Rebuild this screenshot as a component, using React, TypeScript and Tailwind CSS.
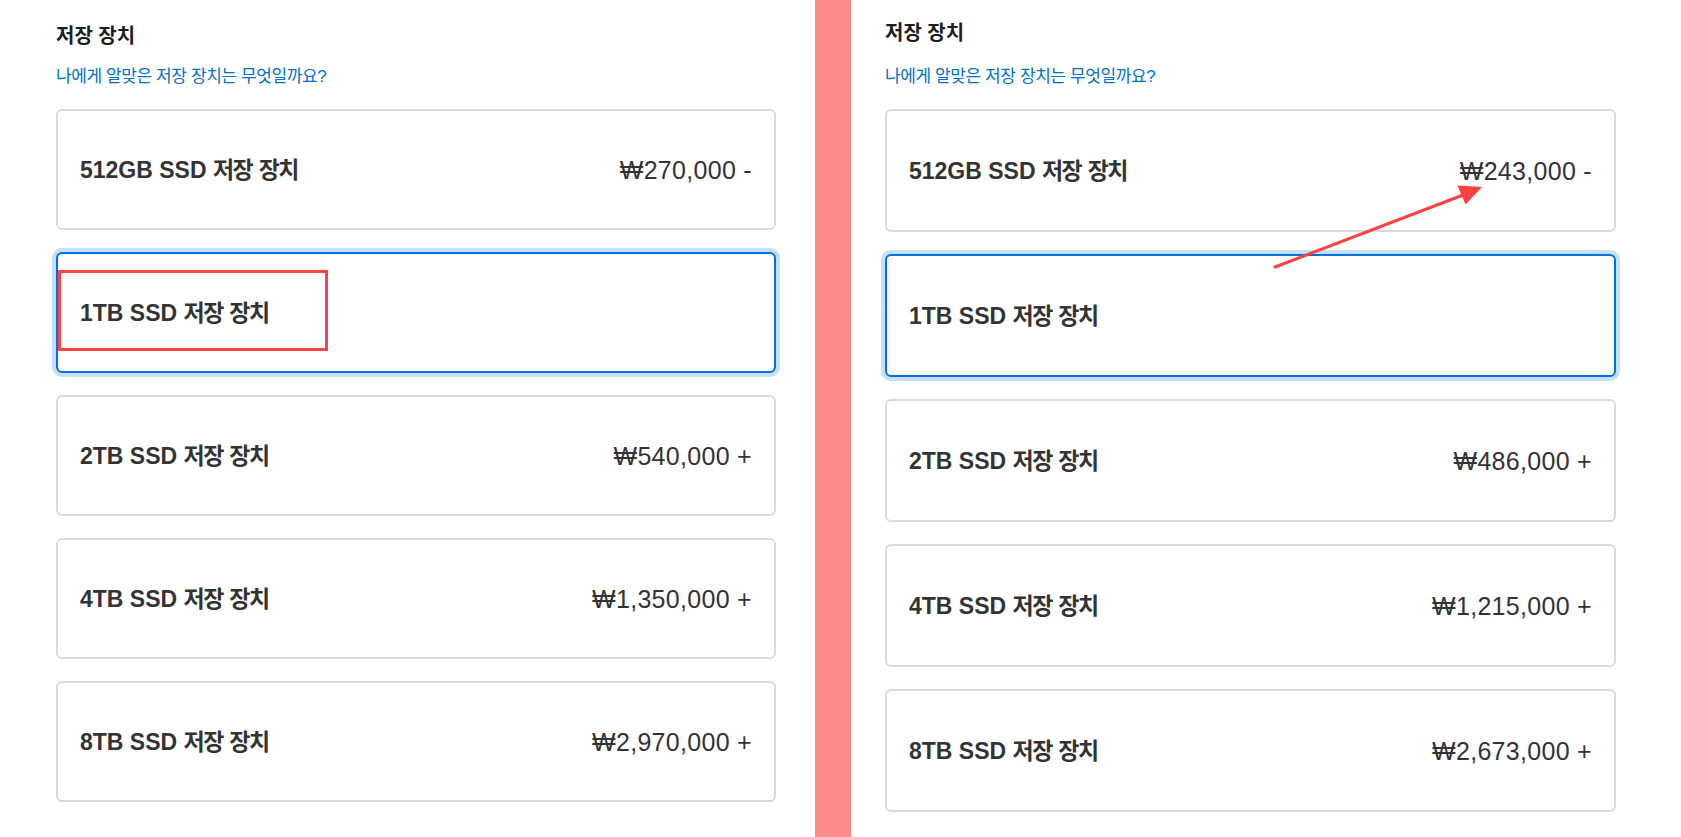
type Option = {
  size: string;
  price?: string;
  selected?: boolean;
};

const leftOptions: Option[] = [
  { size: "512GB", price: "₩270,000 -" },
  { size: "1TB", selected: true },
  { size: "2TB", price: "₩540,000 +" },
  { size: "4TB", price: "₩1,350,000 +" },
  { size: "8TB", price: "₩2,970,000 +" },
];

const rightOptions: Option[] = [
  { size: "512GB", price: "₩243,000 -" },
  { size: "1TB", selected: true },
  { size: "2TB", price: "₩486,000 +" },
  { size: "4TB", price: "₩1,215,000 +" },
  { size: "8TB", price: "₩2,673,000 +" },
];

function OptionCard({
  option,
  tall,
  marked,
}: {
  option: Option;
  tall?: boolean;
  marked?: boolean;
}) {
  const base =
    "relative flex items-center justify-between rounded-[6px] bg-white pl-[22px] pr-[22px]";
  const height = tall ? "h-[123px]" : "h-[121px]";
  const frame = option.selected
    ? "border-2 border-[#0071e3] shadow-[0_0_0_4px_#c4e0fb]"
    : "border-2 border-[#dadada]";

  return (
    <div className={`${base} ${height} ${frame}`}>
      <span className="text-[23px] font-bold leading-[28px] text-[#333336]">
        {option.size} SSD <span className="tracking-[-1.5px]">저장</span>{" "}
        <span className="tracking-[-1.5px]">장치</span>
      </span>
      {option.price && (
        <span className="text-[25px] leading-[30px] tracking-[0.3px] text-[#333336]">
          {option.price}
        </span>
      )}
      {marked && (
        <div className="absolute left-0 top-[16px] h-[81px] w-[270px] border-[3px] border-[#ff4343]" />
      )}
    </div>
  );
}

function StoragePanel({
  options,
  right,
}: {
  options: Option[];
  right?: boolean;
}) {
  return (
    <div
      className={
        right
          ? "flex w-[830px] flex-col pl-[34px] pt-[21px]"
          : "flex w-[815px] flex-col pl-[56px] pt-[24px]"
      }
    >
      <h2 className="text-[20px] font-bold leading-[24px] text-[#1d1d1f]">
        저장 장치
      </h2>
      <a
        className={`text-[17px] leading-[22px] tracking-[-0.4px] text-[#0070c9] ${
          right ? "mt-[21px]" : "mt-[18px]"
        }`}
      >
        나에게 알맞은 저장 장치는 무엇일까요?
      </a>
      <div
        className={`flex flex-col ${
          right ? "mt-[21px] w-[731px] gap-[22px]" : "mt-[21px] w-[720px] gap-[22px]"
        }`}
      >
        {options.map((option, i) => (
          <OptionCard
            key={option.size}
            option={option}
            tall={right}
            marked={!right && i === 1}
          />
        ))}
      </div>
    </div>
  );
}

export default function App() {
  return (
    <div className="relative flex h-[837px] w-[1681px] overflow-hidden bg-white font-['Liberation_Sans','Noto_Sans_CJK_KR',sans-serif]">
      <StoragePanel options={leftOptions} />
      <div className="h-full w-[36px] shrink-0 bg-[#ff8a8a]" />
      <StoragePanel options={rightOptions} right />

      {/* annotation arrow */}
      <svg
        className="pointer-events-none absolute left-0 top-0"
        width="1681"
        height="837"
        viewBox="0 0 1681 837"
      >
        <line
          x1="1275"
          y1="267"
          x2="1463"
          y2="195"
          stroke="#ff4141"
          strokeWidth="3"
          strokeLinecap="round"
        />
        <polygon points="1482,187 1457.5,185.5 1465.5,204.5" fill="#ff4141" />
      </svg>
    </div>
  );
}
